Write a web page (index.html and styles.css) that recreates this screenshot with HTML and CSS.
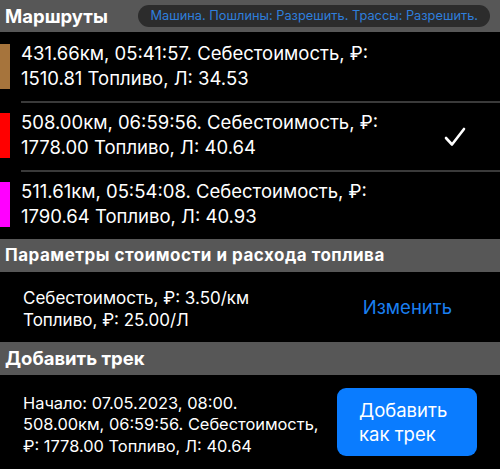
FILE: index.html
```html
<!DOCTYPE html>
<html lang="ru">
<head>
<meta charset="utf-8">
<link rel="stylesheet" href="styles.css">
</head>
<body>
<div class="page">
  <div class="top-header">
    <div class="title">Маршруты</div>
    <div class="pill">Машина. Пошлины: Разрешить. Трассы: Разрешить.</div>
  </div>
  <div class="routes">
    <div class="route">
      <div class="swatch brown"></div>
      <div class="route-text">431.66км, 05:41:57. Себестоимость, ₽:<br>1510.81 Топливо, Л: 34.53</div>
    </div>
    <div class="route">
      <div class="swatch red"></div>
      <div class="route-text">508.00км, 06:59:56. Себестоимость, ₽:<br>1778.00 Топливо, Л: 40.64</div>
      <svg class="check" width="22" height="20" viewBox="0 0 22 20"><path d="M2 11 L8 17.5 L20 2" fill="none" stroke="#fff" stroke-width="2.6" stroke-linecap="round" stroke-linejoin="round"/></svg>
    </div>
    <div class="route">
      <div class="swatch magenta"></div>
      <div class="route-text">511.61км, 05:54:08. Себестоимость, ₽:<br>1790.64 Топливо, Л: 40.93</div>
    </div>
  </div>
  <div class="section-header">Параметры стоимости и расхода топлива</div>
  <div class="params">
    <div class="params-text">Себестоимость, ₽: 3.50/км<br>Топливо, ₽: 25.00/Л</div>
    <div class="link">Изменить</div>
  </div>
  <div class="section-header tall">Добавить трек</div>
  <div class="track">
    <div class="track-text">Начало: 07.05.2023, 08:00.<br>508.00км, 06:59:56. Себестоимость,<br>₽: 1778.00 Топливо, Л: 40.64</div>
    <div class="btn">Добавить<br>как трек</div>
  </div>
</div>
</body>
</html>
```
FILE: styles.css
```css
html, body {
  margin: 0;
  padding: 0;
  background: #000;
}
.page {
  width: 500px;
  height: 469px;
  overflow: hidden;
  background: #000;
  color: #fff;
  font-family: Inter, "Liberation Sans", "DejaVu Sans", sans-serif;
}
.top-header {
  height: 32px;
  background: #575757;
  display: flex;
  align-items: center;
  justify-content: space-between;
  padding: 0 10px 0 5px;
  box-sizing: border-box;
}
.title {
  font-weight: bold;
  font-size: 18.5px;
}
.pill {
  background: #2c2c2c;
  color: #2f7fdc;
  font-size: 12.8px;
  height: 22px;
  line-height: 22px;
  border-radius: 11px;
  padding: 0 12px 0 12px;
  margin-top: -1px;
}
.route {
  height: 69px;
  display: flex;
  align-items: center;
  position: relative;
}
.route + .route::before {
  content: "";
  position: absolute;
  left: 21px;
  right: 0;
  top: 0;
  height: 2px;
  background: #3a3a3a;
}
.swatch {
  width: 10px;
  height: 45px;
  margin-right: 11px;
  flex: none;
}
.brown { background: #a6743c; }
.red { background: #ff0000; }
.magenta { background: #ff00ff; }
.route-text {
  font-size: 18.5px;
  line-height: 24.5px;
  flex: 1;
  margin-top: -2px;
}
.check {
  margin-right: 34px;
  margin-top: 2px;
}
.section-header {
  height: 33px;
  background: #575757;
  font-weight: bold;
  font-size: 17px;
  letter-spacing: 0.5px;
  line-height: 33px;
  padding-left: 5px;
}
.section-header.tall {
  font-size: 18.5px;
  letter-spacing: 0;
}
.params {
  height: 70px;
  display: flex;
  align-items: center;
  padding-left: 23px;
}
.params-text {
  font-size: 17px;
  line-height: 22.5px;
  flex: 1;
  margin-top: 4px;
}
.link {
  color: #1a7ff0;
  font-size: 18.5px;
  margin-right: 48px;
}
.track {
  height: 93px;
  display: flex;
  align-items: center;
  padding-left: 23px;
}
.track-text {
  font-size: 16.4px;
  line-height: 21.5px;
  flex: 1;
  margin-top: 7px;
}
.btn {
  background: #0a7cff;
  width: 140px;
  height: 68px;
  border-radius: 9px;
  box-sizing: border-box;
  padding-left: 22px;
  display: flex;
  align-items: center;
  font-size: 18.5px;
  line-height: 24px;
  margin-right: 23px;
}
```
